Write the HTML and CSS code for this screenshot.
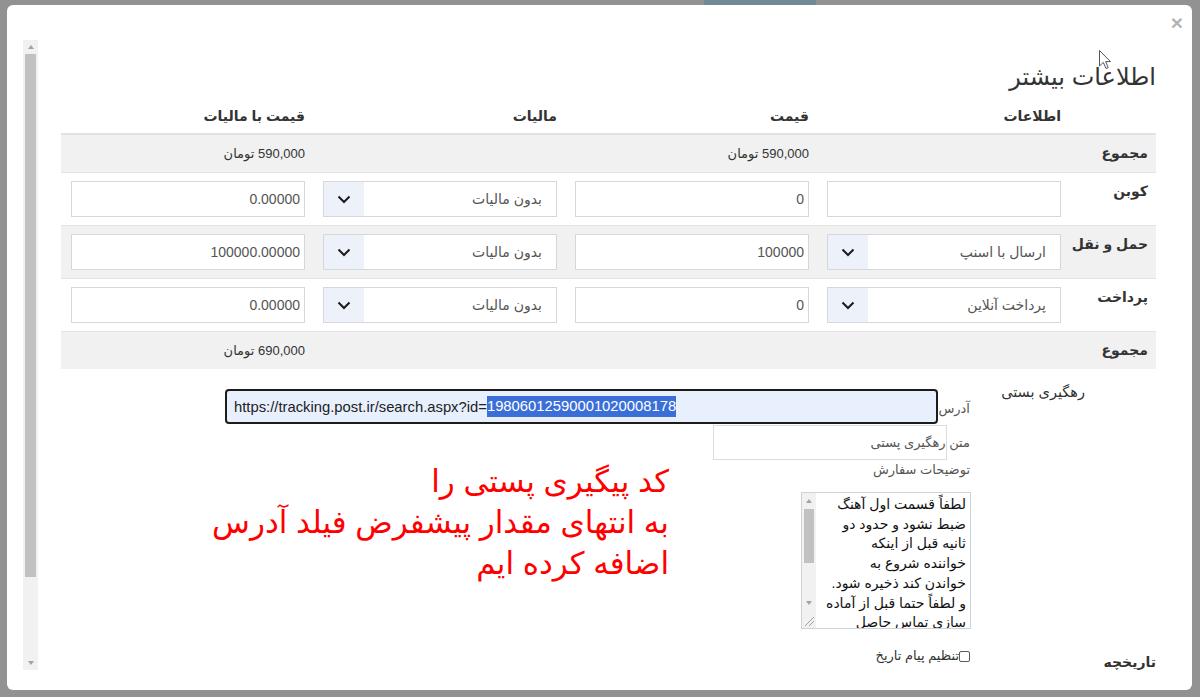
FILE: index.html
```html
<!DOCTYPE html>
<html lang="fa">
<head>
<meta charset="utf-8">
<title>اطلاعات بیشتر</title>
<link rel="stylesheet" href="styles.css">
</head>
<body>
<div class="backdrop-strip"><div class="strip-seg"></div></div>
<div class="modal">
  <div class="modal-head"><span class="close">×</span></div>
  <div class="modal-body">
    <div class="vscroll">
      <div class="sb-btn"><span class="tri-up"></span></div>
      <div class="sb-thumb big"></div>
      <div class="sb-track"></div>
      <div class="sb-btn"><span class="tri-down"></span></div>
    </div>
    <div class="content" dir="rtl">
      <h4 class="title">اطلاعات بیشتر</h4>
      <table class="grid">
        <colgroup><col class="c-label"><col class="c-val"><col class="c-val"><col class="c-val"><col class="c-val"></colgroup>
        <thead>
          <tr><th></th><th>اطلاعات</th><th>قیمت</th><th>مالیات</th><th>قیمت با مالیات</th></tr>
        </thead>
        <tbody>
          <tr class="stripe">
            <th>مجموع</th><td></td><td><span class="money">590,000 تومان</span></td><td></td><td><span class="money">590,000 تومان</span></td>
          </tr>
          <tr>
            <th>کوبن</th>
            <td><input class="field" value="" readonly></td>
            <td><input class="field" value="0" readonly></td>
            <td><div class="select"><span class="select-text">بدون مالیات</span><span class="select-arrow"><svg width="14" height="9" viewBox="0 0 14 9"><path d="M1.5 1.5 L7 7 L12.5 1.5" fill="none" stroke="#1b1b1b" stroke-width="2"/></svg></span></div></td>
            <td><input class="field" value="0.00000" readonly></td>
          </tr>
          <tr class="stripe">
            <th>حمل و نقل</th>
            <td><div class="select"><span class="select-text">ارسال با اسنپ</span><span class="select-arrow"><svg width="14" height="9" viewBox="0 0 14 9"><path d="M1.5 1.5 L7 7 L12.5 1.5" fill="none" stroke="#1b1b1b" stroke-width="2"/></svg></span></div></td>
            <td><input class="field" value="100000" readonly></td>
            <td><div class="select"><span class="select-text">بدون مالیات</span><span class="select-arrow"><svg width="14" height="9" viewBox="0 0 14 9"><path d="M1.5 1.5 L7 7 L12.5 1.5" fill="none" stroke="#1b1b1b" stroke-width="2"/></svg></span></div></td>
            <td><input class="field" value="100000.00000" readonly></td>
          </tr>
          <tr>
            <th>پرداخت</th>
            <td><div class="select"><span class="select-text">پرداخت آنلاین</span><span class="select-arrow"><svg width="14" height="9" viewBox="0 0 14 9"><path d="M1.5 1.5 L7 7 L12.5 1.5" fill="none" stroke="#1b1b1b" stroke-width="2"/></svg></span></div></td>
            <td><input class="field" value="0" readonly></td>
            <td><div class="select"><span class="select-text">بدون مالیات</span><span class="select-arrow"><svg width="14" height="9" viewBox="0 0 14 9"><path d="M1.5 1.5 L7 7 L12.5 1.5" fill="none" stroke="#1b1b1b" stroke-width="2"/></svg></span></div></td>
            <td><input class="field" value="0.00000" readonly></td>
          </tr>
          <tr class="stripe">
            <th>مجموع</th><td></td><td></td><td></td><td><span class="money">690,000 تومان</span></td>
          </tr>
        </tbody>
      </table>

      <div class="section">
        <div class="sec-heads">
          <div class="sec-h1">رهگیری بستی</div>
          <div class="sec-h2">تاریخچه</div>
        </div>
        <div class="sec-form">
          <div class="row-a">
            <span class="lbl lbl-a">آدرس</span>
            <div class="url" dir="ltr"><span>https://tracking.post.ir/search.aspx?id=</span><span class="sel">19806012590001020008178</span></div>
          </div>
          <div class="row-b">
            <div class="tbox"></div>
            <span class="lbl lbl-b">متن رهگیری پستی</span>
          </div>
          <div class="row-c">
            <div class="col-ta">
              <span class="lbl lbl-c">توضیحات سفارش</span>
              <div class="ta">
                <div class="ta-sb">
                  <div class="sb-btn ta-btn"><span class="tri-up"></span></div>
                  <div class="ta-thumb"></div>
                  <div class="sb-track"></div>
                  <div class="sb-btn ta-btn"><span class="tri-down"></span></div>
                  <div class="ta-grip"><svg width="14" height="17" viewBox="0 0 14 17"><path d="M3 15 L12 6 M7 15 L12 10" stroke="#a0a0a0" stroke-width="1" fill="none"/></svg></div>
                </div>
                <div class="ta-text" dir="rtl">لطفاً قسمت اول آهنگ<br>ضبط نشود و حدود دو<br>ثانیه قبل از اینکه<br>خواننده شروع به<br>خواندن کند ذخیره شود.<br>و لطفاً حتما قبل از آماده<br>سازی تماس حاصل<br>فرمایید.</div>
              </div>
            </div>
            <div class="note">کد پیگیری پستی را<br>به انتهای مقدار پیشفرض فیلد آدرس<br>اضافه کرده ایم</div>
          </div>
          <div class="row-e">
            <span class="cb"></span><span class="cb-text">تنظیم پیام تاریخ</span>
          </div>
        </div>
      </div>
    </div>
  </div>
</div>
<svg class="cursor" width="13" height="20" viewBox="0 0 13 20"><path d="M0.5 0.5 L0.5 16 L4.3 12.4 L7 18.5 L9.2 17.6 L6.6 11.6 L11.5 11.6 Z" fill="#fff" stroke="#555" stroke-width="1"/></svg>
</body>
</html>
```

FILE: styles.css
```css
* { box-sizing: border-box; }
html, body { margin: 0; padding: 0; }
body {
  width: 1200px;
  height: 697px;
  overflow: hidden;
  background: #929292;
  font-family: "Liberation Sans", "DejaVu Sans", sans-serif;
  color: #333;
  position: relative;
}
.backdrop-strip { height: 5px; display: flex; }
.strip-seg { margin-left: 704px; width: 112px; background: #718896; }

.modal {
  margin-left: 7px;
  width: 1185px;
  height: 685px;
  background: #fff;
  border-radius: 6px;
  display: flex;
  flex-direction: column;
}
.modal-head {
  height: 35px;
  display: flex;
  justify-content: flex-end;
  align-items: center;
  padding-right: 9px;
  padding-bottom: 1px;
  flex: none;
}
.close { font-size: 21px; font-weight: bold; color: #b3b3b3; line-height: 1; }

.modal-body {
  height: 630px;
  display: flex;
  padding-left: 16px;
  overflow: hidden;
  flex: none;
}
.vscroll {
  width: 15px;
  flex: none;
  background: #f1f1f1;
  display: flex;
  flex-direction: column;
}
.sb-btn { height: 14px; flex: none; display: flex; align-items: center; justify-content: center; }
.tri-up { width: 0; height: 0; border-left: 3.5px solid transparent; border-right: 3.5px solid transparent; border-bottom: 4px solid #a3a3a3; }
.tri-down { width: 0; height: 0; border-left: 3.5px solid transparent; border-right: 3.5px solid transparent; border-top: 4px solid #a3a3a3; }
.sb-thumb.big { height: 523px; margin: 0 2px; background: #c1c1c1; flex: none; }
.sb-track { flex: 1; }

.content { margin-left: 23px; width: 1095px; flex: none; }
.title {
  margin: 0 0 8px;
  padding-top: 22px;
  font-size: 24px;
  line-height: 30px;
  font-weight: normal;
  color: #333;
  text-align: right;
}

.grid { width: 1095px; table-layout: fixed; border-collapse: collapse; font-size: 14px; }
.c-label { width: 87px; }
.c-val { width: 252px; }
.grid thead th {
  padding: 6px 8px 7px 10px;
  line-height: 20px;
  text-align: right;
  font-weight: bold;
  color: #333;
  border-bottom: 2px solid #dfe3e8;
}
.grid tbody th,
.grid tbody td {
  padding: 8px 8px 8px 10px;
  line-height: 20px;
  text-align: right;
  vertical-align: top;
  border-top: 1px solid #e3e3e3;
}
.grid tbody th { font-weight: bold; color: #333; white-space: nowrap; padding-left: 0; }
.grid tbody tr.stripe { background: #f1f1f1; }
.money { font-size: 13px; color: #333; }

.field {
  display: block;
  width: 100%;
  height: 36px;
  margin: 0;
  border: 1px solid #d4d8dd;
  border-radius: 0;
  background: #fff;
  padding: 0 4px;
  font-family: "Liberation Sans", "DejaVu Sans", sans-serif;
  font-size: 14px;
  color: #555;
  outline: none;
  appearance: none;
}
.select {
  display: flex;
  height: 36px;
  border: 1px solid #d4d8dd;
  background: #fff;
}
.select-text { flex: 1; padding-right: 14px; line-height: 34px; color: #555; font-size: 14px; white-space: nowrap; }
.select-arrow { width: 40px; flex: none; background: #edf2fa; display: flex; align-items: center; justify-content: center; }

.section { display: flex; margin-top: 12px; }
.sec-heads { width: 185px; flex: none; display: flex; flex-direction: column; font-size: 14.5px; color: #333; }
.sec-h1 { padding-right: 71px; line-height: 22px; }
.sec-h2 { margin-top: auto; font-weight: bold; line-height: 18px; font-size: 14px; }
.sec-form { width: 746px; flex: none; padding-top: 8px; padding-bottom: 9px; }

.lbl { font-size: 13px; color: #555; line-height: 20px; white-space: nowrap; }
.row-a { display: flex; height: 35px; }
.lbl-a { width: 32px; margin-right: 1px; padding-top: 10px; flex: none; }
.url {
  width: 713px;
  height: 35px;
  flex: none;
  border: 2px solid #1c1c1c;
  border-radius: 4px;
  background: #e8f0fe;
  display: flex;
  align-items: center;
  padding-left: 7px;
  font-family: "Liberation Sans", sans-serif;
  font-size: 14.8px;
  color: #222;
  white-space: nowrap;
}
.sel { background: #3b6fd8; color: #fff; line-height: 21px; }

.row-b { display: grid; height: 35px; margin-top: 1px; }
.row-b > * { grid-area: 1 / 1; }
.tbox { justify-self: start; margin-right: 24px; width: 234px; height: 35px; border: 1px solid #dcdcdc; }
.lbl-b { justify-self: start; align-self: center; margin-right: 1px; }

.row-c { display: flex; align-items: flex-start; }
.col-ta { width: 170px; flex: none; }
.lbl-c { display: block; margin-right: 1px; }
.ta {
  margin-top: 12px;
  width: 170px;
  height: 137px;
  border: 1px solid #cdd3da;
  display: flex;
  direction: ltr;
  background: #fff;
}
.ta-sb { width: 14px; flex: none; background: #f1f1f1; display: flex; flex-direction: column; }
.ta-btn { height: 16px; }
.ta-thumb { height: 54px; flex: none; margin: 0 2px; background: #c1c1c1; }
.ta-grip { height: 17px; flex: none; }
.ta-grip svg { display: block; }
.ta-text {
  flex: 1;
  direction: rtl;
  text-align: right;
  padding: 2px 4px 0 0;
  font-size: 14px;
  line-height: 19.7px;
  color: #111;
  white-space: nowrap;
  overflow: hidden;
}
.note {
  margin-right: 132px;
  margin-top: 1px;
  color: #ff0000;
  font-size: 31px;
  line-height: 41px;
  white-space: nowrap;
}

.row-e { display: flex; align-items: center; margin-top: 21px; height: 12px; }
.cb { width: 11px; height: 11px; flex: none; border: 1px solid #5a5a5a; border-radius: 2px; background: #fff; margin-right: 1px; }
.cb-text { font-size: 13px; line-height: 14px; color: #333; }

.cursor { position: absolute; left: 1099px; top: 50px; }
```
